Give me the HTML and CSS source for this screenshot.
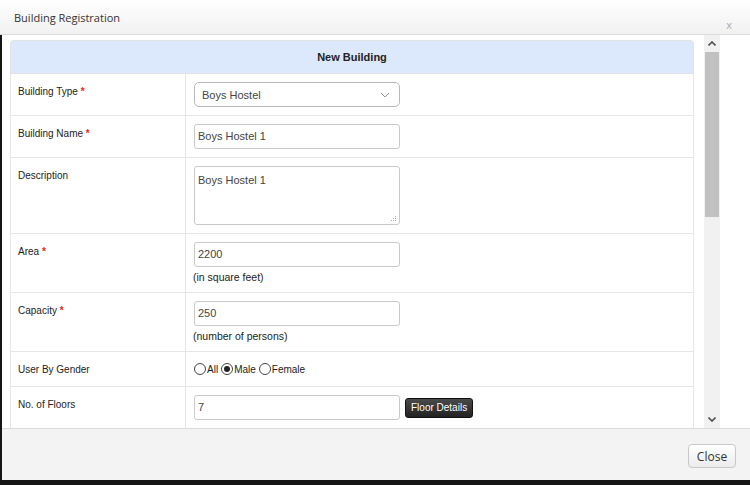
FILE: index.html
```html
<!DOCTYPE html>
<html>
<head>
<meta charset="utf-8">
<link rel="stylesheet" href="styles.css">
</head>
<body>
<div class="dialog">
  <div class="titlebar">
    <span class="title">Building Registration</span>
    <span class="close-x">x</span>
  </div>
  <div class="body">
    <div class="scroll-area">
      <table class="form">
        <colgroup><col class="c-label"><col class="c-field"></colgroup>
        <tr class="head"><th colspan="2">New Building</th></tr>
        <tr>
          <td class="label">Building Type <span class="req">*</span></td>
          <td class="field">
            <div class="select"><span>Boys Hostel</span>
              <svg class="chev" width="10" height="6" viewBox="0 0 10 6"><path d="M1 1 L5 5 L9 1" fill="none" stroke="#999" stroke-width="1"/></svg>
            </div>
          </td>
        </tr>
        <tr>
          <td class="label">Building Name <span class="req">*</span></td>
          <td class="field"><div class="input">Boys Hostel 1</div></td>
        </tr>
        <tr>
          <td class="label">Description</td>
          <td class="field"><div class="input textarea">Boys Hostel 1
            <svg class="grip" width="7" height="7" viewBox="0 0 7 7"><g fill="#aaa"><rect x="5" y="1" width="1" height="1"/><rect x="3" y="3" width="1" height="1"/><rect x="5" y="3" width="1" height="1"/><rect x="1" y="5" width="1" height="1"/><rect x="3" y="5" width="1" height="1"/><rect x="5" y="5" width="1" height="1"/></g></svg>
          </div></td>
        </tr>
        <tr>
          <td class="label">Area <span class="req">*</span></td>
          <td class="field"><div class="input">2200</div><div class="hint">(in square feet)</div></td>
        </tr>
        <tr>
          <td class="label">Capacity <span class="req">*</span></td>
          <td class="field"><div class="input">250</div><div class="hint">(number of persons)</div></td>
        </tr>
        <tr>
          <td class="label">User By Gender</td>
          <td class="field">
            <div class="radios">
              <span class="radio"></span><span class="rlabel">All</span>
              <span class="radio checked"></span><span class="rlabel">Male</span>
              <span class="radio"></span><span class="rlabel">Female</span>
            </div>
          </td>
        </tr>
        <tr>
          <td class="label">No. of Floors</td>
          <td class="field"><div class="inline"><div class="input">7</div><span class="btn-dark">Floor Details</span></div></td>
        </tr>
        <tr>
          <td class="label">&nbsp;</td>
          <td class="field">&nbsp;</td>
        </tr>
      </table>
    </div>
    <div class="scrollbar">
      <div class="arrow up"><svg width="8" height="5" viewBox="0 0 8 5"><path d="M0.5 4.5 L4 1 L7.5 4.5" fill="none" stroke="#505050" stroke-width="1.6"/></svg></div>
      <div class="thumb"></div>
      <div class="track"></div>
      <div class="arrow down"><svg width="8" height="5" viewBox="0 0 8 5"><path d="M0.5 0.5 L4 4 L7.5 0.5" fill="none" stroke="#505050" stroke-width="1.6"/></svg></div>
    </div>
    <div class="right-pad"></div>
  </div>
  <div class="footer">
    <span class="btn-close">Close</span>
  </div>
</div>
</body>
</html>
```
FILE: styles.css
```css
html, body {
  margin: 0;
  padding: 0;
  background: #151515;
  width: 750px;
  height: 485px;
  overflow: hidden;
}
.dialog {
  width: 750px;
  height: 480px;
  display: flex;
  flex-direction: column;
  font-family: "Liberation Sans", Arial, sans-serif;
  color: #333;
}
.titlebar {
  height: 34px;
  background: linear-gradient(#ffffff, #f1f1f1);
  border-bottom: 1px solid #dcdcdc;
  display: flex;
  align-items: center;
  justify-content: space-between;
  padding: 0 18px 0 14px;
}
.title {
  font-family: "Open Sans", sans-serif;
  font-size: 11px;
  color: #333;
}
.close-x {
  font-family: "Open Sans", sans-serif;
  font-size: 11px;
  color: #aaa;
  margin-top: 14px;
}
.body {
  height: 393px;
  background: #fff;
  margin-left: 2px;
  display: flex;
  border-bottom: 1px solid #dcdcdc;
}
.scroll-area {
  width: 684px;
  padding: 5px 0 0 8px;
  overflow: hidden;
}
.form {
  width: 684px;
  border-collapse: separate;
  border-spacing: 0;
  table-layout: fixed;
}
.c-label {
  width: 176px;
}
.form th {
  height: 32px;
  background: #dce8fb;
  font-size: 11px;
  font-weight: bold;
  color: #222;
  border: 1px solid #e2e2e2;
  border-radius: 4px 4px 0 0;
  padding: 0;
}
.form td {
  border-bottom: 1px solid #e6e6e6;
  vertical-align: top;
  padding: 8px;
}
.form td.label {
  border-left: 1px solid #e6e6e6;
  border-right: 1px solid #e6e6e6;
  font-size: 10px;
  color: #222;
  padding-top: 12px;
  padding-left: 7px;
  line-height: 12px;
}
.form td.field {
  border-right: 1px solid #e6e6e6;
  font-size: 11px;
}
.req {
  color: #e22;
  font-weight: bold;
}
.input, .select {
  box-sizing: border-box;
  width: 206px;
  height: 25px;
  border: 1px solid #c9c9c9;
  border-radius: 3px;
  font-size: 11px;
  color: #444;
  padding: 0 3px;
  line-height: 23px;
  background: #fff;
  position: relative;
}
.select {
  border-radius: 5px;
  border-color: #b8b8b8;
  padding-left: 7px;
  display: flex;
  align-items: center;
  justify-content: space-between;
  padding-right: 9px;
  line-height: normal;
}
.textarea {
  height: 59px;
  line-height: 14px;
  padding-top: 6px;
}
.grip {
  position: absolute;
  right: 2px;
  bottom: 2px;
}
.hint {
  font-size: 10.5px;
  color: #222;
  margin-top: 3px;
  margin-left: -1px;
  line-height: 14px;
  height: 14px;
}
.radios {
  display: flex;
  align-items: center;
  height: 18px;
  font-size: 10px;
  color: #222;
}
.radio {
  box-sizing: border-box;
  width: 12px;
  height: 12px;
  border: 1px solid #444;
  border-radius: 50%;
  display: inline-flex;
  align-items: center;
  justify-content: center;
  background: #fff;
}
.radio.checked::after {
  content: "";
  width: 6px;
  height: 6px;
  border-radius: 50%;
  background: #222;
}
.rlabel {
  margin: 0 3px 0 1px;
}
.inline {
  display: flex;
  align-items: center;
  gap: 5px;
}
.btn-dark {
  height: 20px;
  box-sizing: border-box;
  padding: 0 5px;
  line-height: 18px;
  background: linear-gradient(#4a4a4a, #222);
  border: 1px solid #111;
  border-radius: 3px;
  color: #fff;
  font-size: 10px;
  margin-top: 1px;
}
.scrollbar {
  width: 16px;
  margin-left: 10px;
  display: flex;
  flex-direction: column;
  background: #f1f1f1;
}
.arrow {
  height: 17px;
  display: flex;
  align-items: center;
  justify-content: center;
}
.thumb {
  height: 165px;
  background: #c1c1c1;
  margin: 0 1px;
}
.track {
  flex: 1;
}
.right-pad {
  flex: 1;
}
.footer {
  flex: 1;
  margin-left: 2px;
  background: #f3f3f3;
  display: flex;
  justify-content: flex-end;
  align-items: flex-start;
  padding: 15px 14px 0 0;
}
.btn-close {
  box-sizing: border-box;
  width: 48px;
  height: 24px;
  border: 1px solid #c8c8c8;
  border-radius: 4px;
  background: linear-gradient(#ffffff, #ececec);
  font-family: "Open Sans", sans-serif;
  font-size: 12px;
  color: #333;
  display: flex;
  align-items: center;
  justify-content: center;
}
```
